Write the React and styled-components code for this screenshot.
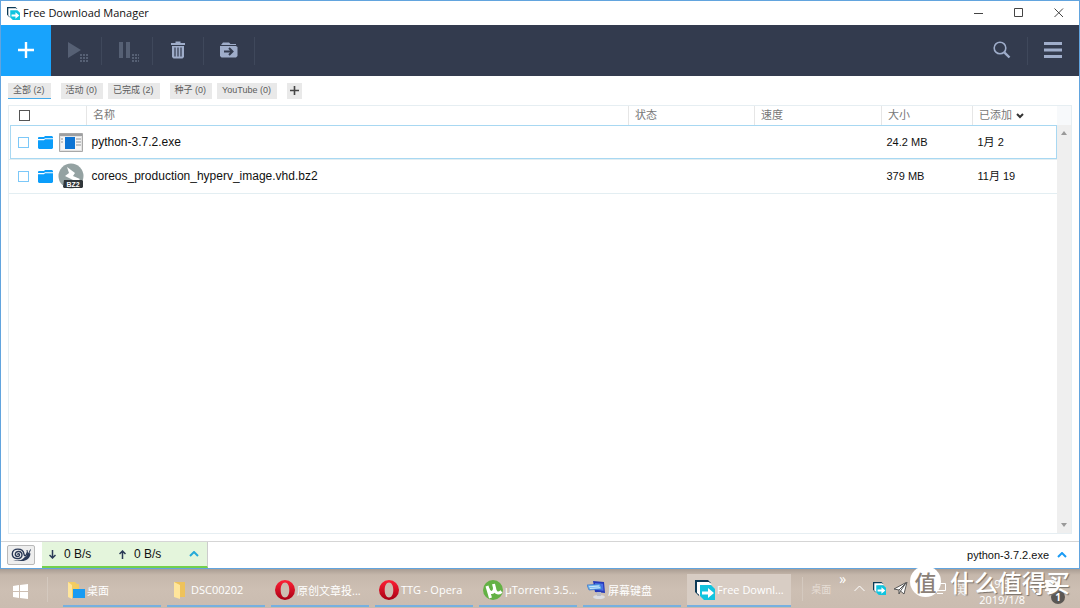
import React, { useState } from "react";
import styled, { createGlobalStyle } from "styled-components";

const tabs = [
  { id: "all", label: "全部 (2)" },
  { id: "active", label: "活动 (0)", wide: true },
  { id: "done", label: "已完成 (2)" },
  { id: "torrent", label: "种子 (0)", wide: true },
  { id: "youtube", label: "YouTube (0)" },
];

const downloads = [
  { id: 1, name: "python-3.7.2.exe", size: "24.2 MB", added: "1月 2", type: "exe" },
  {
    id: 2,
    name: "coreos_production_hyperv_image.vhd.bz2",
    size: "379 MB",
    added: "11月 19",
    type: "bz2",
  },
];

const FdmIcon = ({ size }) => (
  <svg width={size} height={size} viewBox="0 0 20 20">
    <path d="M0 0h13l3 3H4v13L0 12z" fill="#0d3a56" />
    <path d="M2 2h12l3 3H7v12l-5-4z" fill="#fff" />
    <path d="M5 5h11l4 4v11H9l-4-4z" fill="#10c4df" />
    <path d="M7 11.500h6V8l6 5-6 5v-3.500H7z" fill="#fff" />
  </svg>
);

const OperaIcon = () => (
  <svg width="20" height="20" viewBox="0 0 20 20">
    <defs>
      <linearGradient id="opera" x1="0" y1="0" x2="0" y2="1">
        <stop offset="0" stopColor="#ff2136" />
        <stop offset="1" stopColor="#a70014" />
      </linearGradient>
    </defs>
    <path
      fill="url(#opera)"
      fillRule="evenodd"
      d="M10 0a10 10 0 1 0 0 20 10 10 0 0 0 0-20zm0 2.500c2.700 0 4.300 3.300 4.300 7.500s-1.600 7.500-4.300 7.500S5.700 14.200 5.700 10 7.300 2.500 10 2.500z"
    />
  </svg>
);

const TorrentIcon = () => (
  <svg width="20" height="20" viewBox="0 0 20 20">
    <circle cx="10" cy="10" r="10" fill="#64b145" />
    <path
      d="M4 6l3.500 12M5 8.500c1.500 6 6.500 5 6.500-.5L10.500 4M11.500 8c.5 5 3.500 6.500 7 3.500"
      fill="none"
      stroke="#fff"
      strokeWidth="3"
    />
  </svg>
);

const KeyboardIcon = () => (
  <svg width="19" height="20" viewBox="0 0 19 20">
    <path d="M6 1l11 1 1 11-10-1z" fill="#2438b8" />
    <path d="M8 3l8 .7.6 7-8-1z" fill="#4c70e8" />
    <path d="M0 5l13-1 2 5-13 1z" fill="#6fb7ee" stroke="#2b66c4" strokeWidth=".6" />
    <path d="M2 6.800l10-.8M3 8.500l10-.8" stroke="#e8f5ff" strokeWidth=".8" />
    <ellipse cx="12" cy="17" rx="6" ry="2" fill="#dcdde2" />
    <path d="M10 12h4v4h-4z" fill="#b9bcc8" />
  </svg>
);

const DesktopIcon = () => (
  <svg width="18" height="18" viewBox="0 0 18 18">
    <path d="M1 1h7l2 2h2v13H1z" fill="#f3cc63" />
    <path d="M1 1l4 3v14l-4-2z" fill="#ffe59b" />
    <path d="M6 8h12v9H6z" fill="#189bf3" />
  </svg>
);

const FolderIcon = () => (
  <svg width="18" height="18" viewBox="0 0 18 18">
    <path d="M3 1h11v15H3z" fill="#eec25b" />
    <path d="M3 1l6 3v14l-6-2z" fill="#ffe59b" />
  </svg>
);

const tasks = [
  { id: 1, label: "桌面", icon: <DesktopIcon /> },
  { id: 2, label: "DSC00202", icon: <FolderIcon /> },
  { id: 3, label: "原创文章投...", icon: <OperaIcon /> },
  { id: 4, label: "TTG - Opera", icon: <OperaIcon /> },
  { id: 5, label: "µTorrent 3.5...", icon: <TorrentIcon /> },
  { id: 6, label: "屏幕键盘", icon: <KeyboardIcon /> },
  { id: 7, label: "Free Downl...", icon: <FdmIcon size={20} />, active: true },
];

const GridDots = ({ x, y }) => (
  <path
    d={`M${x} ${y}h8M${x} ${y + 3}h8M${x} ${y + 6}h8`}
    stroke="#566074"
    strokeWidth="2"
    strokeDasharray="2 1"
  />
);

const ExeIcon = () => (
  <svg width="24" height="19" viewBox="0 0 24 19">
    <path d="M.5.5h23v18H.5z" fill="#e3e3e3" stroke="#a8a8a8" />
    <path d="M1 1h22v2H1z" fill="#9d9fa1" />
    <path d="M2 4h20v13H2z" fill="#f5f5f5" />
    <path d="M6 4h10v12H6z" fill="#0c74d4" />
    <path d="M17 6h5M17 9h5M17 12h5M2 6h2M2 9h2" stroke="#8f9396" />
  </svg>
);

const Bz2Icon = () => (
  <svg width="26" height="26" viewBox="0 0 26 26">
    <circle cx="13" cy="13" r="12.500" fill="#94a2a2" />
    <path d="M9 4l8 6-2 3 7 3-3 3-12-6 4-3z" fill="#fff" />
    <path d="M6 17h18l1 1v6l-1 1H6l-1-1z" fill="#30363a" />
    <text x="15" y="24" textAnchor="middle" fontSize="7" fontWeight="700" fill="#fff">
      BZ2
    </text>
  </svg>
);

const BlueFolder = () => (
  <svg width="15" height="13" viewBox="0 0 15 13">
    <path d="M0 3V1.500L1 1h5l1-1h7l1 1v1.200L7 2.200 6 3z" fill="#0b9dfa" />
    <path d="M0 4.200h6l1-1h8V12l-1 1H1l-1-1z" fill="#0b9dfa" />
  </svg>
);

const Chevron = ({ color, up }) => (
  <svg width="10" height="6" viewBox="0 0 10 6">
    <path d={up ? "M1 5l4-4 4 4" : "M2 1l3 3 3-3"} fill="none" stroke={color} strokeWidth="2" />
  </svg>
);

const App = () => {
  const [activeTab, setActiveTab] = useState("all");

  return (
    <StPage>
      <GlobalStyle />
      <StWindow>
        <StTitleBar>
          <FdmIcon size={13} />
          <StTitle>Free Download Manager</StTitle>
          <StWindowButton aria-label="Minimize">
            <svg width="10" height="10">
              <path d="M0 5.500h9" stroke="#444" />
            </svg>
          </StWindowButton>
          <StWindowButton aria-label="Maximize">
            <svg width="10" height="10">
              <path d="M.5.5h8v8h-8z" fill="none" stroke="#444" />
            </svg>
          </StWindowButton>
          <StWindowButton aria-label="Close">
            <svg width="10" height="10">
              <path d="M.5.5l8.500 8.500M9 .5L.5 9" stroke="#444" />
            </svg>
          </StWindowButton>
        </StTitleBar>

        <StToolbar>
          <StAddButton aria-label="Add">
            <svg width="16" height="16">
              <path d="M8 0v16M0 8h16" stroke="#fff" strokeWidth="2.400" />
            </svg>
          </StAddButton>
          <StToolButton aria-label="Start">
            <svg width="24" height="24">
              <path d="M4 4l13 8-13 8z" fill="#566074" />
              <GridDots x={16} y={17} />
            </svg>
          </StToolButton>
          <StToolButton aria-label="Pause">
            <svg width="24" height="24">
              <path d="M4 4h4v16H4zM11 4h4v16h-4z" fill="#566074" />
              <GridDots x={17} y={17} />
            </svg>
          </StToolButton>
          <StToolButton aria-label="Delete">
            <svg width="14" height="18">
              <path d="M0 2h4.500V.5h5V2H14v2H0z" fill="#9fadca" />
              <path d="M1 5h12v11l-1.500 1.500h-9L1 16z" fill="#9fadca" />
              <path d="M4 6.500v9M7 6.500v9M10 6.500v9" stroke="#333b4e" strokeWidth="1.200" />
            </svg>
          </StToolButton>
          <StToolButton aria-label="Move to">
            <svg width="18" height="16">
              <path d="M1 3l2-2.500h6L10.500 2H16v1z" fill="#9fadca" />
              <path d="M0 4h16l1.500 1v9L16 15.500H1.500L0 14z" fill="#9fadca" />
              <path d="M4 9.500h8M9 6l3.500 3.500L9 13" fill="none" stroke="#333b4e" strokeWidth="2" />
            </svg>
          </StToolButton>
          <StSpacer />
          <StToolButton aria-label="Search">
            <svg width="18" height="18">
              <circle cx="7" cy="7" r="5.800" fill="none" stroke="#9fadca" strokeWidth="1.600" />
              <path d="M11.300 11.300l5.200 5.200" stroke="#9fadca" strokeWidth="2.400" />
            </svg>
          </StToolButton>
          <StToolButton aria-label="Menu" $last>
            <svg width="18" height="18">
              <path d="M0 2.500h18M0 9h18M0 15.500h18" stroke="#9fadca" strokeWidth="3" />
            </svg>
          </StToolButton>
        </StToolbar>

        <StTabs>
          {tabs.map((tab) => (
            <StTab
              key={tab.id}
              $active={tab.id === activeTab}
              $wide={tab.wide}
              onClick={() => setActiveTab(tab.id)}
            >
              {tab.label}
            </StTab>
          ))}
          <StTab $wide aria-label="Add tag">
            <svg width="9" height="9">
              <path d="M4.500 0v9M0 4.500h9" stroke="#444" strokeWidth="1.600" />
            </svg>
          </StTab>
        </StTabs>

        <StList>
          <StTable>
            <colgroup>
              <col width="77" />
              <col />
              <col width="126" />
              <col width="127" />
              <col width="91" />
              <col width="84" />
            </colgroup>
            <thead>
              <tr>
                <StHeadCell $check>
                  <StCheckbox type="checkbox" aria-label="Select all" $dark />
                </StHeadCell>
                <StHeadCell>名称</StHeadCell>
                <StHeadCell>状态</StHeadCell>
                <StHeadCell>速度</StHeadCell>
                <StHeadCell>大小</StHeadCell>
                <StHeadCell>
                  已添加 <Chevron color="#333" />
                </StHeadCell>
              </tr>
            </thead>
            <tbody>
              {downloads.map((item) => (
                <StRow key={item.id} $selected={item.id === 1}>
                  <StCell>
                    <StRowIcons>
                      <StCheckbox type="checkbox" aria-label={item.name} />
                      <BlueFolder />
                      <StFileIcon>{item.type === "exe" ? <ExeIcon /> : <Bz2Icon />}</StFileIcon>
                    </StRowIcons>
                  </StCell>
                  <StCell>{item.name}</StCell>
                  <StCell />
                  <StCell />
                  <StCell $small>{item.size}</StCell>
                  <StCell $small>{item.added}</StCell>
                </StRow>
              ))}
            </tbody>
          </StTable>
          <StScrollColumn>
            <StScrollBar>
              <svg width="6" height="4">
                <path d="M0 4l3-4 3 4z" fill="#999" />
              </svg>
              <svg width="6" height="4">
                <path d="M0 0l3 4 3-4z" fill="#999" />
              </svg>
            </StScrollBar>
          </StScrollColumn>
        </StList>

        <StFooter>
          <StSnailButton aria-label="Snail mode">
            <svg width="20" height="14" viewBox="0 0 20 14">
              <path
                d="M6.500 6.800c0-1.500 2-1.300 2 .2 0 2.200-4.200 2.200-4.200-.7 0-3.800 6.700-3.800 6.700.8 0 5-9.700 4.700-9.700-1C1.300-.5 12-.5 13 6c.5 3 2.500 2 3.200-1.500"
                fill="none"
                stroke="#2b3a57"
                strokeWidth="1.400"
              />
              <path d="M2 13c4-1 6 0 9-1.500 2-1.500 2.500-2.500 4.500-3.500l1-3.500 3 1C19 11 15 13 11 13z" fill="#2b3a57" />
              <path d="M18 5l1.500-3.500M16.500 5L16 2" stroke="#2b3a57" />
            </svg>
          </StSnailButton>
          <StSpeed>
            <svg width="7" height="9">
              <path d="M3.500 0v8M.5 5l3 3 3-3" fill="none" stroke="#2b3a57" strokeWidth="1.500" />
            </svg>
            <StRate>0 B/s</StRate>
            <svg width="7" height="9">
              <path d="M3.500 9V1M.5 4l3-3 3 3" fill="none" stroke="#2b3a57" strokeWidth="1.500" />
            </svg>
            <StRate>0 B/s</StRate>
            <Chevron color="#26a9d8" up />
          </StSpeed>
          <StSpacer />
          <StCurrent>
            python-3.7.2.exe
            <Chevron color="#1a9bf5" up />
          </StCurrent>
        </StFooter>
      </StWindow>

      <StTaskbar>
        <StStart aria-label="Start menu">
          <svg width="15" height="15">
            <path d="M0 2l6-1v6H0zM7 1l8-1v7H7zM0 8h6v6l-6-1zM7 8h8v7l-8-1z" fill="#fff" />
          </svg>
        </StStart>
        <StTasks>
          {tasks.map((task) => (
            <StTask key={task.id} $active={task.active}>
              {task.icon}
              <span>{task.label}</span>
            </StTask>
          ))}
        </StTasks>
        <StTray>
          <StTrayLabel>桌面</StTrayLabel>
          <StMore>»</StMore>
          <svg width="11" height="7">
            <path d="M.5 6l5-5 5 5" fill="none" stroke="#fff" />
          </svg>
          <FdmIcon size={13} />
          <svg width="14" height="13" viewBox="0 0 14 13">
            <path d="M0 7L13 0l-3 12-3.500-3L5 12V8z" fill="#fff" stroke="#555" />
            <path d="M5 8l7-7-5.500 8" fill="none" stroke="#555" />
          </svg>
          <StNetwork width="12" height="11">
            <path d="M.5.5h11v7H.5zM3 10.500h6" fill="none" stroke="#fff" />
          </StNetwork>
          <StLanguage>英</StLanguage>
          <StClock>
            <span>19:57</span>
            <span>2019/1/8</span>
          </StClock>
          <StNotice>
            <svg width="15" height="14">
              <path d="M0 0h15v11H7l-3 3v-3H0z" fill="#fff" />
            </svg>
            <StBadge>1</StBadge>
          </StNotice>
        </StTray>
      </StTaskbar>

      <StWatermark>
        <StSeal>值</StSeal>
        什么值得买
      </StWatermark>
    </StPage>
  );
};

const GlobalStyle = createGlobalStyle`
  * {
    box-sizing: border-box;
  }
  body {
    margin: 0;
    font-family: "Liberation Sans", "Noto Sans CJK SC", sans-serif;
  }
  button {
    border: 0;
    padding: 0;
    background: none;
    font-family: inherit;
    cursor: pointer;
  }
  svg {
    flex-shrink: 0;
  }
`;

const StPage = styled.div`
  position: relative;
  display: flex;
  flex-direction: column;
  min-height: 100vh;
  background: #cabcb0;
`;

const StWindow = styled.main`
  display: flex;
  flex: 1;
  flex-direction: column;
  border: 1px solid #62a4de;
  background: #fff;
`;

const StTitleBar = styled.header`
  display: flex;
  align-items: center;
  height: 24px;
  padding-left: 6px;
`;

const StTitle = styled.h1`
  flex: 1;
  margin: 0 0 0 3px;
  color: #111;
  font-family: "Open Sans", sans-serif;
  font-size: 11px;
  font-weight: 400;
  line-height: 14px;
`;

const StWindowButton = styled.button`
  display: flex;
  align-items: center;
  justify-content: center;
  width: 40px;
  height: 24px;
`;

const StToolbar = styled.nav`
  display: flex;
  height: 51px;
  background: #333b4e;
`;

const StAddButton = styled.button`
  display: flex;
  align-items: center;
  justify-content: center;
  width: 50px;
  padding-bottom: 2px;
  background: #18a3fc;
`;

const StToolButton = styled.button`
  display: flex;
  align-items: center;
  justify-content: center;
  width: 51px;
  padding: 0 2px 2px 0;
  background: ${({ $last }) =>
    $last ? "none" : "linear-gradient(#3f485b, #3f485b) right center / 1px 28px no-repeat"};
`;

const StSpacer = styled.div`
  flex: 1;
`;

const StTabs = styled.div`
  display: flex;
  padding: 7px 7px 6px;
`;

const StTab = styled.button`
  display: flex;
  align-items: center;
  height: 16px;
  margin-left: ${({ $wide }) => ($wide ? "10px" : "5px")};
  padding: 0 6px 0 5px;
  border-bottom: 1px solid ${({ $active }) => ($active ? "#42a9ea" : "#e9e9e9")};
  background: #e9e9e9;
  color: #5c5c5c;
  font-size: 9px;
  line-height: 15px;
  &:first-child {
    margin-left: 0;
  }
  &:last-child {
    padding: 0 3px;
  }
`;

const StList = styled.section`
  display: flex;
  flex: 1;
  align-items: stretch;
  margin: 0 7px 7px;
  border: 1px solid #e6eef2;
`;

const StTable = styled.table`
  flex: 1;
  align-self: flex-start;
  width: 100%;
  border-collapse: collapse;
  table-layout: fixed;
`;

const StHeadCell = styled.th`
  height: 19px;
  padding: ${({ $check }) => ($check ? "0 0 0 9px" : "0 0 0 6px")};
  border-right: 1px solid #e6e6e6;
  color: #777;
  font-size: 11px;
  font-weight: 400;
  line-height: 18px;
  text-align: left;
  &:last-child {
    border-right: 0;
  }
`;

const StCheckbox = styled.input`
  display: block;
  flex-shrink: 0;
  width: 11px;
  height: 11px;
  margin: 0;
  border: 1px solid ${({ $dark }) => ($dark ? "#555" : "#7cc8f8")};
  background: #fff;
  appearance: none;
`;

const StRow = styled.tr`
  height: 34px;
  border: 1px solid transparent;
  border-bottom-color: #e3eef2;
  outline: ${({ $selected }) => ($selected ? "1px solid #a8d8f2" : "none")};
  outline-offset: -1px;
`;

const StCell = styled.td`
  padding: 0 0 0 5px;
  color: #111;
  font-size: ${({ $small }) => ($small ? "11px" : "12px")};
  line-height: 16px;
  white-space: nowrap;
  &:first-child {
    padding-left: 8px;
  }
`;

const StRowIcons = styled.div`
  display: flex;
  gap: 9px;
  align-items: center;
`;

const StFileIcon = styled.span`
  display: flex;
  justify-content: center;
  width: 26px;
  margin-left: -4px;
`;

const StScrollColumn = styled.div`
  width: 14px;
  padding-top: 19px;
  background: #f7f9fb;
`;

const StScrollBar = styled.div`
  display: flex;
  flex-direction: column;
  align-items: center;
  justify-content: space-between;
  height: 100%;
  padding: 6px 0;
  background: #efefef;
`;

const StFooter = styled.footer`
  display: flex;
  align-items: center;
  height: 27px;
  border-top: 1px solid #d5d5d5;
`;

const StSnailButton = styled.button`
  display: flex;
  align-items: center;
  justify-content: center;
  width: 28px;
  height: 20px;
  margin: 0 7px 0 6px;
  border: 1px solid #b9b9b9;
  border-radius: 2px;
  background: #eee;
`;

const StSpeed = styled.div`
  display: flex;
  align-items: center;
  height: 100%;
  padding: 0 8px 0 7px;
  border-right: 1px solid #ccc;
  border-bottom: 2px solid #74d04c;
  background: #e4f5dc;
  color: #111;
  font-size: 12px;
`;

const StRate = styled.span`
  width: 55px;
  margin-left: 8px;
`;

const StCurrent = styled.div`
  display: flex;
  gap: 8px;
  align-items: center;
  padding-right: 12px;
  color: #111;
  font-size: 11px;
`;

const StTaskbar = styled.footer`
  display: flex;
  height: 39px;
  background: linear-gradient(#a99c92, #c6b8ac 6px, #cdbfb3 20px, #cabcb0);
  color: #fff;
  font-family: "Open Sans", "Noto Sans CJK SC", sans-serif;
  font-size: 11px;
`;

const StStart = styled.button`
  display: flex;
  align-items: center;
  width: 48px;
  margin: 8px 0 6px;
  padding: 4px 0 0 13px;
  border-right: 1px solid #d4c9bf;
`;

const StTasks = styled.div`
  display: flex;
  gap: 6px;
  padding-left: 15px;
`;

const StTask = styled.button`
  display: flex;
  gap: 2px;
  align-items: center;
  width: ${({ $active }) => ($active ? "104px" : "98px")};
  margin: 5px 0 1px;
  padding-left: ${({ $active }) => ($active ? "8px" : "4px")};
  border-bottom: 2px solid #76b0e0;
  background: ${({ $active }) => ($active ? "#d8cdc4" : "none")};
  color: #fff;
  font-size: 11px;
  white-space: nowrap;
`;

const StTray = styled.div`
  display: flex;
  flex: 1;
  gap: 8px;
  align-items: center;
  justify-content: flex-end;
  padding-right: 20px;
`;

const StTrayLabel = styled.span`
  padding-left: 8px;
  border-left: 1px solid #d4c9bf;
  color: #e6ddd5;
  font-size: 10px;
  line-height: 24px;
`;

const StMore = styled.span`
  align-self: flex-start;
  font-size: 14px;
`;

const StNetwork = styled.svg`
  margin-left: 18px;
`;

const StLanguage = styled.span`
  color: #eee;
  font-size: 13px;
`;

const StClock = styled.div`
  display: flex;
  flex-direction: column;
  align-items: center;
  align-self: flex-end;
  margin-left: 4px;
  font-size: 11px;
  line-height: 16px;
`;

const StNotice = styled.div`
  position: relative;
  margin-left: 12px;
`;

const StBadge = styled.span`
  position: absolute;
  top: 10px;
  left: 6px;
  width: 14px;
  height: 14px;
  border-radius: 50%;
  background: #5b5754;
  font-size: 10px;
  font-weight: 700;
  line-height: 14px;
  text-align: center;
`;

const StWatermark = styled.div`
  position: absolute;
  right: 10px;
  bottom: 11px;
  display: flex;
  gap: 9px;
  align-items: center;
  color: #fff;
  font-family: "Noto Sans CJK SC", sans-serif;
  font-size: 24px;
  font-weight: 500;
  line-height: 24px;
  text-shadow: 1px 1px 1px #77706a;
`;

const StSeal = styled.span`
  width: 31px;
  height: 31px;
  border-radius: 50%;
  background: #fff;
  color: #8b8178;
  font-size: 22px;
  line-height: 30px;
  text-align: center;
  text-shadow: none;
`;

export default App;
